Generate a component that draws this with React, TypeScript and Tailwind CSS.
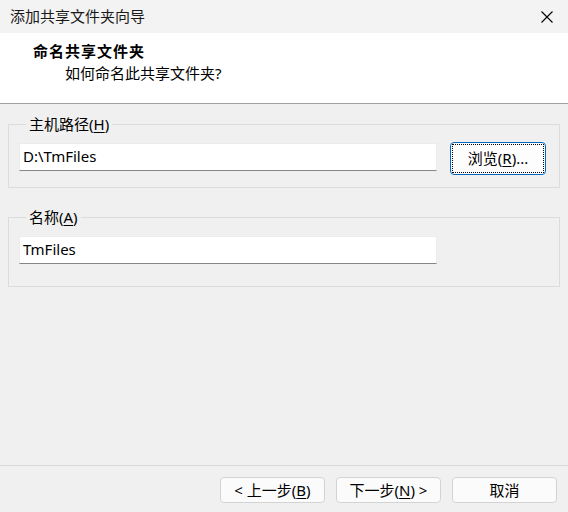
import React from "react";

const font = { fontFamily: '"Noto Sans", "Noto Sans CJK SC", sans-serif' };

function U({ children }: { children: React.ReactNode }) {
  return <span className="underline underline-offset-2 decoration-1">{children}</span>;
}

function Btn({ children }: { children: React.ReactNode }) {
  return (
    <button className="w-[105px] h-[26px] rounded-[4px] border border-[#d3d3d3] bg-[#fbfbfb] text-[15px] leading-none text-black flex items-center justify-center">
      {children}
    </button>
  );
}

function Input({ value }: { value: string }) {
  return (
    <div className="w-[418px] h-[28px] bg-white border border-[#ececec] border-b-[#868686] flex items-center px-[3px] pb-[2px] text-[15px] text-black">
      {value}
    </div>
  );
}

export default function App() {
  return (
    <div className="w-[568px] h-[512px] bg-[#f0f0f0] flex flex-col overflow-hidden" style={font}>
      <div className="h-[33px] bg-[#f3f3f3] flex items-center justify-between pl-[10px] pr-[15px]">
        <span className="text-[15px] text-[#1a1a1a]">添加共享文件夹向导</span>
        <svg width="12" height="12" viewBox="0 0 12 12" className="mt-[1px]">
          <path d="M0.5 0.5 L11.5 11.5 M11.5 0.5 L0.5 11.5" stroke="#000" strokeWidth="1.1" />
        </svg>
      </div>
      <div className="h-[71px] bg-white border-b border-[#a0a0a0] flex flex-col pt-[8px]">
        <div className="pl-[33px] text-[15px] font-bold text-black leading-[20px] tracking-[1px]">命名共享文件夹</div>
        <div className="pl-[65px] text-[15px] text-black leading-[20px] mt-[2px]">如何命名此共享文件夹?</div>
      </div>

      <fieldset className="mx-2 mt-[10px] border border-[#dcdcdc] pl-[10px] pb-[12px] pt-[8px]">
        <legend className="ml-[7px] px-[3px] text-[15px] leading-[20px] text-black">
          主机路径(<U>H</U>)
        </legend>
        <div className="flex items-start gap-[13px]">
          <div className="pt-[1px]">
            <Input value="D:\TmFiles" />
          </div>
          <button className="w-[96px] h-[33px] rounded-[4px] border border-[#0067c0] bg-[#fdfdfd] p-[1px]">
            <div className="w-full h-full border border-dotted border-black flex items-center justify-center text-[15px] leading-none text-black">
              浏览(<U>R</U>)...
            </div>
          </button>
        </div>
      </fieldset>

      <fieldset className="mx-2 mt-[19px] border border-[#dcdcdc] pl-[10px] pb-[22px] pt-[9px]">
        <legend className="ml-[7px] px-[3px] text-[15px] leading-[20px] text-black">
          名称(<U>A</U>)
        </legend>
        <Input value="TmFiles" />
      </fieldset>

      <div className="flex-1" />
      <div className="border-t border-[#d8d8d8] h-[47px] flex justify-end items-start pt-[11px] pr-[11px] gap-[11px]">
        <Btn>&lt; 上一步(<U>B</U>)</Btn>
        <Btn>下一步(<U>N</U>) &gt;</Btn>
        <Btn>取消</Btn>
      </div>
    </div>
  );
}
